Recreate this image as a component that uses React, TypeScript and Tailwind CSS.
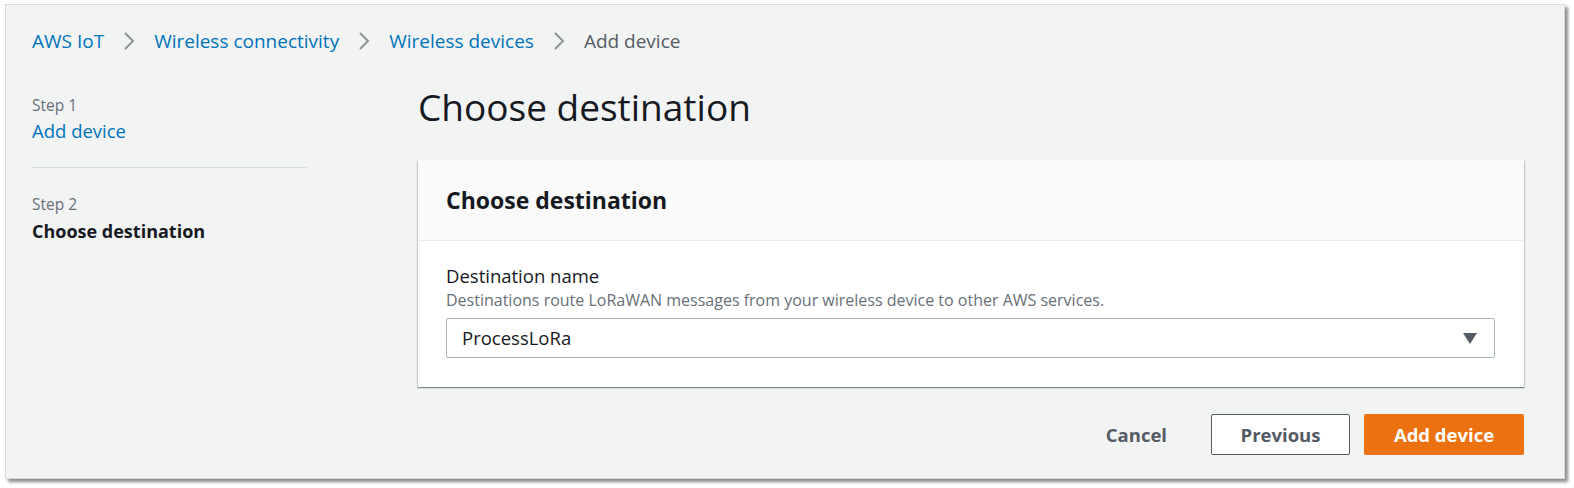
import React from 'react';

const Chevron = () => (
  <svg width="14" height="20" viewBox="0 0 14 20" className="mx-[18px]">
    <path d="M3 2l8 8-8 8" fill="none" stroke="#8d9596" strokeWidth="2" />
  </svg>
);

export default function App() {
  return (
    <div className="w-[1574px] h-[488px] bg-white pt-[4px] pl-[5px]" style={{ fontFamily: '"Open Sans", "Noto Sans", sans-serif' }}>
      <div className="w-[1560px] h-[475px] bg-[#f2f3f3] border border-[#d5dbdb] shadow-[3px_3px_3px_rgba(0,0,0,0.45)] flex flex-col">
        {/* breadcrumbs */}
        <div className="flex items-center h-[40px] mt-[16px] pl-[26px] text-[19px]">
          <span className="text-[#0073bb]">AWS IoT</span>
          <Chevron />
          <span className="text-[#0073bb]">Wireless connectivity</span>
          <Chevron />
          <span className="text-[#0073bb]">Wireless devices</span>
          <Chevron />
          <span className="text-[#545b64]">Add device</span>
        </div>

        <div className="flex">
          {/* steps */}
          <div className="w-[275px] ml-[26px] mt-[33px] shrink-0">
            <div className="text-[15.5px] text-[#687078] leading-[22px]">Step 1</div>
            <div className="text-[18.5px] text-[#0073bb] leading-[30px]">Add device</div>
            <div className="h-px bg-[#d5dbdb] mt-[21px]" />
            <div className="text-[15.5px] text-[#687078] leading-[22px] mt-[25px]">Step 2</div>
            <div className="text-[18px] font-bold text-[#16191f] leading-[30px] mt-[1px]">Choose destination</div>
          </div>

          {/* main */}
          <div className="ml-[111px] w-[1106px] flex flex-col">
            <h1 className="text-[37px] text-[#16191f] leading-[48px] mt-[22px]">Choose destination</h1>
            <div className="mt-[29px] bg-white shadow-[0_1px_1px_0_rgba(0,28,36,0.3),1px_1px_1px_0_rgba(0,28,36,0.15),-1px_1px_1px_0_rgba(0,28,36,0.15)]">
              <div className="h-[81px] bg-[#fafafa] border-b border-[#eaeded] flex items-center px-[28px]">
                <h2 className="text-[23px] font-bold text-[#16191f]">Choose destination</h2>
              </div>
              <div className="pl-[28px] pr-[29px] pt-[23px] pb-[29px]">
                <div className="text-[18.5px] text-[#16191f] leading-[24px]">Destination name</div>
                <div className="text-[16px] text-[#687078] leading-[20px] mt-[2px]">
                  Destinations route LoRaWAN messages from your wireless device to other AWS services.
                </div>
                <div className="mt-[8px] h-[40px] border border-[#aab7b8] rounded-[2px] flex items-center justify-between pl-[15px] pr-[17px]">
                  <span className="text-[18.5px] text-[#16191f]">ProcessLoRa</span>
                  <svg width="14" height="11" viewBox="0 0 14 11">
                    <path d="M0 0h14L7 11z" fill="#545b64" />
                  </svg>
                </div>
              </div>
            </div>

            <div className="flex justify-end items-center mt-[27px]">
              <button className="h-[41px] text-[18.5px] font-bold text-[#545b64] mr-[44px]">Cancel</button>
              <button className="w-[139px] h-[41px] border border-[#545b64] rounded-[2px] bg-white text-[18.5px] font-bold text-[#545b64] mr-[14px]">Previous</button>
              <button className="w-[160px] h-[41px] rounded-[2px] bg-[#ec7211] text-[18.5px] font-bold text-white">Add device</button>
            </div>
          </div>
        </div>
      </div>
    </div>
  );
}
